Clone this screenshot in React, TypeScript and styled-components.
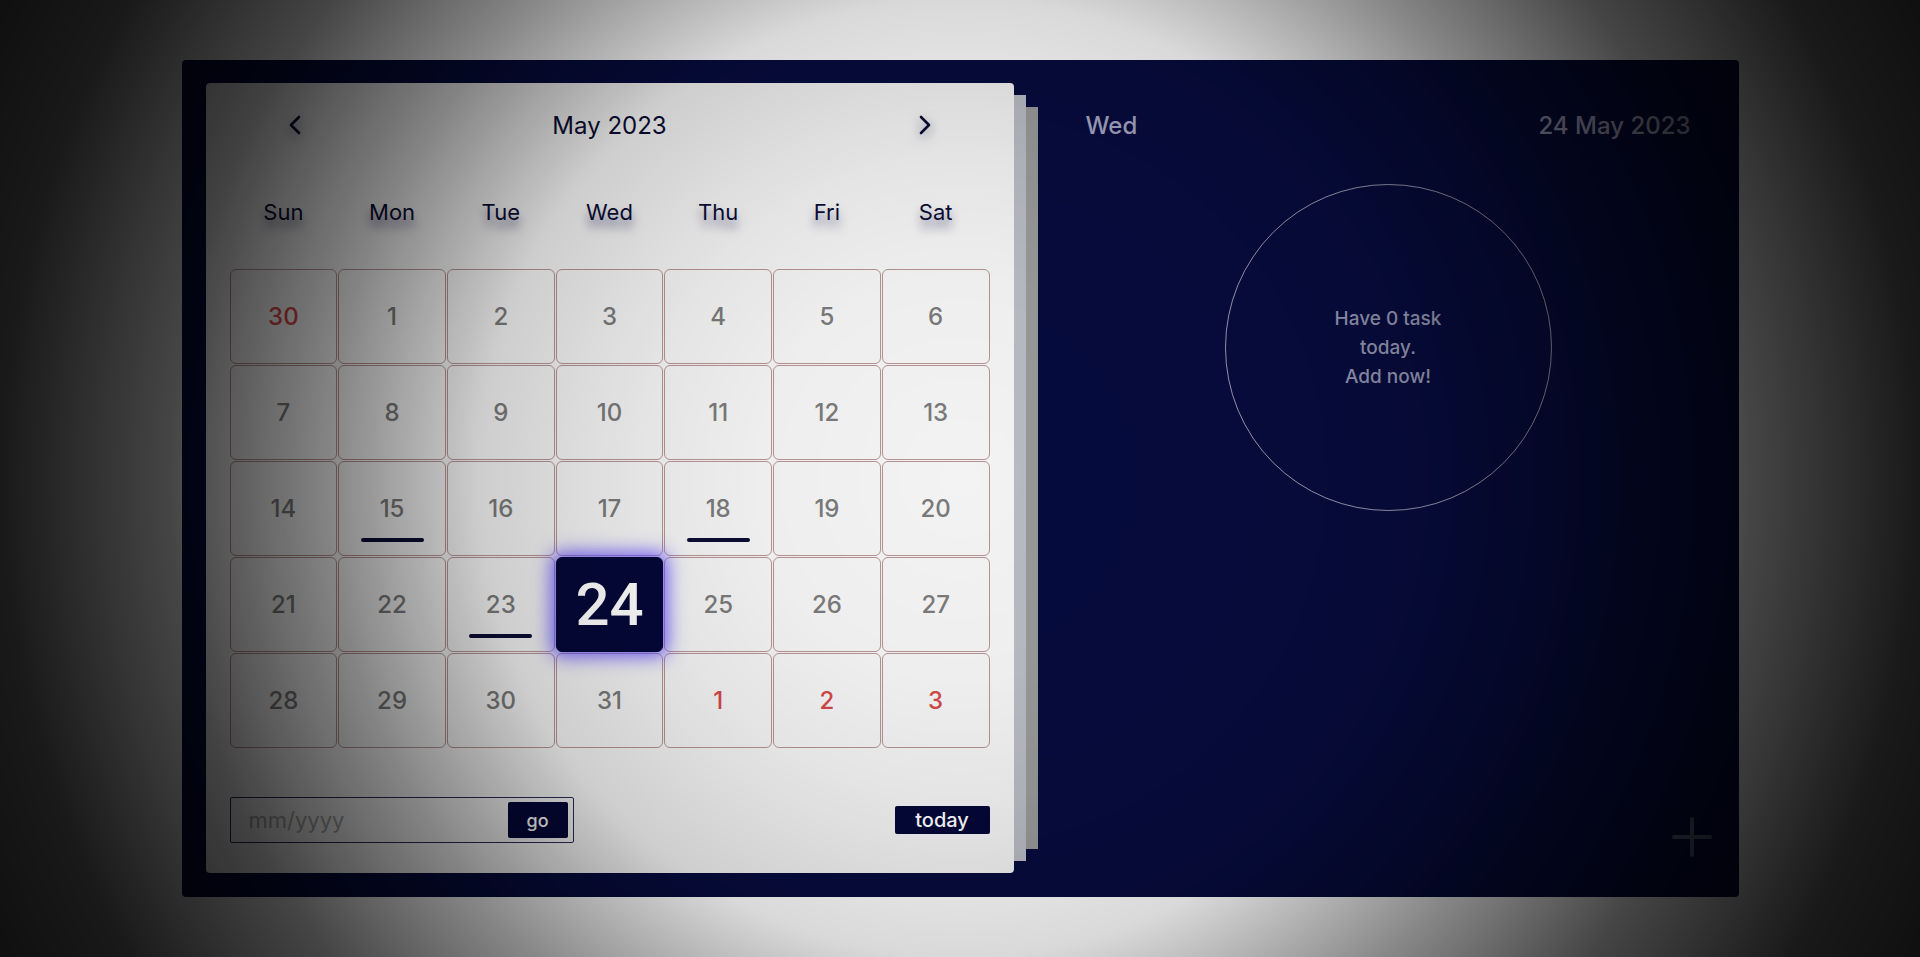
import React from "react";
import styled, {createGlobalStyle} from "styled-components";

const GlobalStyle = createGlobalStyle`
  html, body {
    margin: 0;
    padding: 0;
    background: #ffffff;
  }

  body {
    font-family: Inter, "Noto Sans", "Liberation Sans", sans-serif;
  }

  * {
    box-sizing: border-box;
  }
`;

const Page = styled.div`
  display: flex;
  align-items: center;
  justify-content: center;
  height: 957px;
  width: 100%;
`;

// dark vignette laid over the whole screen
const Vignette = styled.div`
  position: fixed;
  inset: 0;
  pointer-events: none;
  z-index: 10;
  background: radial-gradient(
    circle at 50% 50%,
    rgba(0, 0, 0, 0) 0px,
    rgba(0, 0, 0, 0.02) 200px,
    rgba(0, 0, 0, 0.06) 323px,
    rgba(0, 0, 0, 0.15) 478px,
    rgba(0, 0, 0, 0.47) 640px,
    rgba(0, 0, 0, 0.73) 790px,
    rgba(0, 0, 0, 0.9) 960px,
    rgba(0, 0, 0, 0.95) 1100px
  );
`;

const Board = styled.div`
  display: flex;
  width: 1557px;
  height: 837px;
  padding: 23px 0 24px 24px;
  background: #070c3e;
  border-radius: 4px;
`;

const Card = styled.div`
  display: flex;
  flex-direction: column;
  width: 808px;
  flex-shrink: 0;
  margin-right: 24px;
  padding: 24px 24px 30px;
  background: #f3f3f3;
  border-radius: 4px;
  box-shadow: 24px 0 0 -12px #b9bbc4, 48px 0 0 -24px #999999;
`;

const Header = styled.div`
  display: flex;
  align-items: center;
  justify-content: space-between;
  height: 36px;
  padding: 0 57px;
`;

const ArrowButton = styled.button`
  display: flex;
  align-items: center;
  justify-content: center;
  width: 16px;
  height: 24px;
  padding: 0;
  border: none;
  background: none;
  color: #0b0d35;
  filter: drop-shadow(0 4px 6px rgba(40, 40, 90, 0.6));
  cursor: pointer;
`;

const MonthTitle = styled.div`
  font-size: 24px;
  font-weight: 400;
  color: #0b0d35;
`;

const WeekRow = styled.div`
  display: grid;
  grid-template-columns: repeat(7, 1fr);
  column-gap: 1px;
  height: 40px;
  margin-top: 49px;
  margin-bottom: 37px;
`;

const WeekDay = styled.div`
  display: flex;
  align-items: center;
  justify-content: center;
  font-size: 22px;
  font-weight: 400;
  color: #0b0d35;
  text-shadow: 0 8px 10px rgba(45, 45, 100, 0.6);
`;

const DayGrid = styled.div`
  display: grid;
  grid-template-columns: repeat(7, 1fr);
  grid-template-rows: repeat(5, 95px);
  gap: 1px;
`;

const DayCell = styled.div<{ $muted?: boolean; $active?: boolean }>`
  position: relative;
  display: flex;
  align-items: center;
  justify-content: center;
  border: 1px solid ${p => (p.$active ? "#050838" : "#b59393")};
  border-radius: 6px;
  font-size: ${p => (p.$active ? "60px" : "24px")};
  font-family: ${p => (p.$active ? "Roboto, \"Liberation Sans\", sans-serif" : "inherit")};
  font-weight: 500;
  color: ${p => (p.$active ? "#ffffff" : p.$muted ? "#d24848" : "#7a7a7a")};
  background: ${p => (p.$active ? "#050838" : "transparent")};
  box-shadow: ${p => (p.$active ? "0 0 18px 5px rgba(100, 80, 255, 0.85)" : "none")};
  z-index: ${p => (p.$active ? 2 : 0)};
`;

const TaskMark = styled.span`
  position: absolute;
  left: 50%;
  bottom: 13px;
  width: 63px;
  height: 4px;
  margin-left: -31.5px;
  border-radius: 2px;
  background: #0b0d35;
`;

const Footer = styled.div`
  display: flex;
  align-items: center;
  justify-content: space-between;
  margin-top: 49px;
  height: 46px;
`;

const JumpBox = styled.form`
  display: flex;
  align-items: center;
  width: 344px;
  height: 46px;
  padding: 4px 5px 4px 16px;
  border: 1px solid #2a2d55;
  border-radius: 2px;
`;

const JumpInput = styled.input`
  flex: 1;
  min-width: 0;
  border: none;
  outline: none;
  background: transparent;
  font-family: inherit;
  font-size: 22px;
  color: #333;

  &::placeholder {
    color: #a8a8a8;
  }
`;

const NavyButton = styled.button<{ $wide?: boolean }>`
  display: flex;
  align-items: center;
  justify-content: center;
  width: ${p => (p.$wide ? "95px" : "60px")};
  height: ${p => (p.$wide ? "28px" : "36px")};
  padding: 0;
  border: none;
  border-radius: 2px;
  background: #050838;
  color: #ffffff;
  font-family: inherit;
  font-size: ${p => (p.$wide ? "20px" : "18px")};
  font-weight: 500;
  cursor: pointer;
`;

const Panel = styled.div`
  flex: 1;
  display: flex;
  flex-direction: column;
  align-items: center;
  padding: 24px 27px 16px 48px;
`;

const PanelHeader = styled.div`
  display: flex;
  align-items: center;
  justify-content: space-between;
  align-self: stretch;
  height: 36px;
  margin-right: 21px;
  font-size: 24px;
  font-weight: 500;
  color: #a3a4c2;
`;

const TaskCircle = styled.div`
  display: flex;
  align-items: center;
  justify-content: center;
  width: 327px;
  height: 327px;
  margin-top: 41px;
  margin-right: 21px;
  border: 1px solid rgba(200, 200, 215, 0.75);
  border-radius: 50%;
`;

const TaskText = styled.div`
  width: 130px;
  text-align: center;
  font-size: 19px;
  font-weight: 500;
  line-height: 29px;
  color: #9395b2;
`;

const AddRow = styled.div`
  display: flex;
  justify-content: flex-end;
  align-self: stretch;
  margin-top: auto;
`;

const AddButton = styled.button`
  display: flex;
  width: 40px;
  height: 40px;
  padding: 0;
  border: none;
  background: none;
  color: #5c5e7c;
  cursor: pointer;
`;

type Day = { n: number; muted?: boolean };

const days: Day[] = [
    {n: 30, muted: true},
    ...Array.from({length: 31}, (_, i) => ({n: i + 1})),
    {n: 1, muted: true},
    {n: 2, muted: true},
    {n: 3, muted: true},
];

const marked = [15, 18, 23];
const weekDays = ["Sun", "Mon", "Tue", "Wed", "Thu", "Fri", "Sat"];

const Chevron = ({dir}: { dir: "left" | "right" }) => (
    <svg width="14" height="22" viewBox="0 0 14 22" fill="none">
        <path
            d={dir === "left" ? "M11 3 L3 11 L11 19" : "M3 3 L11 11 L3 19"}
            stroke="currentColor"
            strokeWidth="2.6"
            strokeLinecap="round"
            strokeLinejoin="round"
        />
    </svg>
);

export default function App() {
    return (
        <>
            <GlobalStyle/>
            <Page>
                <Board>
                    <Card>
                        <Header>
                            <ArrowButton><Chevron dir="left"/></ArrowButton>
                            <MonthTitle>May 2023</MonthTitle>
                            <ArrowButton><Chevron dir="right"/></ArrowButton>
                        </Header>
                        <WeekRow>
                            {weekDays.map(d => <WeekDay key={d}>{d}</WeekDay>)}
                        </WeekRow>
                        <DayGrid>
                            {days.map((d, i) => {
                                const active = !d.muted && d.n === 24;
                                return (
                                    <DayCell key={i} $muted={d.muted} $active={active}>
                                        {d.n}
                                        {!d.muted && marked.includes(d.n) && <TaskMark/>}
                                    </DayCell>
                                );
                            })}
                        </DayGrid>
                        <Footer>
                            <JumpBox onSubmit={e => e.preventDefault()}>
                                <JumpInput placeholder="mm/yyyy"/>
                                <NavyButton type="submit">go</NavyButton>
                            </JumpBox>
                            <NavyButton $wide>today</NavyButton>
                        </Footer>
                    </Card>
                    <Panel>
                        <PanelHeader>
                            <span>Wed</span>
                            <span>24 May 2023</span>
                        </PanelHeader>
                        <TaskCircle>
                            <TaskText>Have 0 task today.<br/>Add now!</TaskText>
                        </TaskCircle>
                        <AddRow>
                            <AddButton>
                                <svg width="40" height="40" viewBox="0 0 40 40">
                                    <path d="M20 2 V38 M2 20 H38" stroke="currentColor" strokeWidth="4"
                                          strokeLinecap="round"/>
                                </svg>
                            </AddButton>
                        </AddRow>
                    </Panel>
                </Board>
            </Page>
            <Vignette/>
        </>
    );
}
